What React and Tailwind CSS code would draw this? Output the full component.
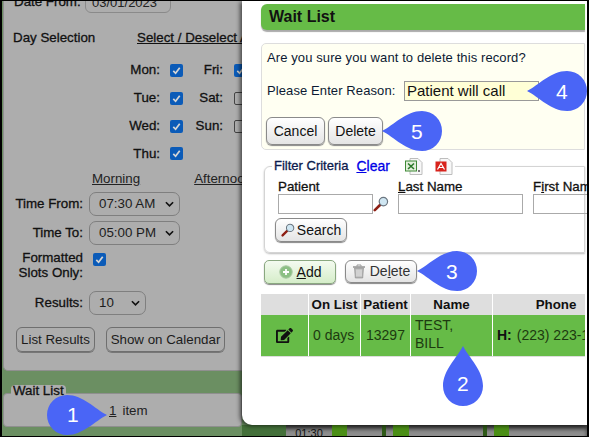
import React from "react";
import { FaEdit } from "react-icons/fa";

function Pin({ n, className, dir }) {
  // tip direction: left, right or up; the number sits a little towards the tip
  const rotate = { right: "", left: "rotate(180 30 30)", up: "rotate(-90 30 30)" }[dir];
  const box = dir === "up" ? "w-[40px] h-[62px]" : "w-[60px] h-[40px]";
  const view = dir === "up" ? "10 0 40 62" : "0 10 60 40";
  return (
    <div className={`absolute ${box} ${className}`}>
      <svg viewBox={view} className="absolute inset-0 w-full h-full">
        <path transform={rotate} fill="#4a65f6" d="M60 30 C48 24 36 10 20 10 A20 20 0 0 0 20 50 C36 50 48 36 60 30Z" />
      </svg>
      <span className={`absolute text-white text-[21px] leading-none ${dir === "right" ? "left-[20px] top-[9px]" : dir === "left" ? "left-[29px] top-[10px]" : "left-[14px] top-[27px]"}`}>{n}</span>
    </div>
  );
}

function Check({ on = true }) {
  return on ? (
    <span className="w-[13px] h-[13px] rounded-[2px] bg-[#0b5bb8] flex items-center justify-center shrink-0">
      <svg viewBox="0 0 12 12" className="w-[11px] h-[11px]"><path d="M2.5 6.5 5 9l4.5-6" fill="none" stroke="#d5d5d5" strokeWidth="1.9" /></svg>
    </span>
  ) : (
    <span className="block w-[13px] h-[13px] rounded-[2px] border border-[#444] shrink-0" />
  );
}

function Select({ value, width }) {
  return (
    <div className={`${width} h-[24px] rounded-[7px] border border-[#7f7f7f] flex items-center justify-between pl-[9px] pr-[5px] text-[13.33px] text-[#1c1c1c]`}>
      <span>{value}</span>
      <svg viewBox="0 0 10 6" className="w-[9px] h-[6px]"><path d="M1 1l4 4 4-4" fill="none" stroke="#111" strokeWidth="1.8" /></svg>
    </div>
  );
}

function DayRow({ day, on, day2, on2, height = "h-[28px]" }) {
  return (
    <div className={`flex items-center ${height}`}>
      <span className="w-[156px] shrink-0 text-right text-[13.33px] [-webkit-text-stroke:0.3px]">{day}</span>
      <span className="ml-[10px] shrink-0"><Check on={on} /></span>
      {day2 && <span className="w-[40px] shrink-0 text-right text-[13.33px] [-webkit-text-stroke:0.3px]">{day2}</span>}
      {day2 && <span className="ml-[11px] shrink-0"><Check on={on2} /></span>}
    </div>
  );
}

function GrayButton({ children, className }) {
  return (
    <div className={`h-[25px] rounded-[6px] border border-[#6f6f6f] shadow-[0_1px_0_#777] flex items-center justify-center text-[13.33px] text-[#1c1c1c] ${className}`}>{children}</div>
  );
}

function ModalButton({ children, className }) {
  return (
    <div className={`rounded-[6px] border border-[#8a8a8a] bg-gradient-to-b from-white to-[#e4e4e4] shadow-[0_1px_1px_#888] flex items-center justify-center text-[14px] text-[#111] ${className}`}>{children}</div>
  );
}

function Magnifier({ className }) {
  return (
    <svg viewBox="0 0 16 16" className={className}>
      <path d="M7 9 1.8 14.2" stroke="#8e1f14" strokeWidth="2.6" strokeLinecap="round" />
      <circle cx="10.4" cy="5.6" r="4.2" fill="#cfe6f2" stroke="#6b7680" strokeWidth="1.2" />
    </svg>
  );
}

function FileIcon({ kind }) {
  const excel = kind === "excel";
  return (
    <svg viewBox="0 0 18 17" className="w-[18px] h-[17px]">
      <path d="M5 .5h8l4 4v12H5z" fill="#f7f7f7" stroke="#bdbdbd" />
      {excel ? (
        <>
          <rect x="0.5" y="3" width="11" height="10" fill="#e3efdc" stroke="#3f8a37" />
          <path d="M3 5.5l6 5.5M9 5.5l-6 5.5" stroke="#2c7a2a" strokeWidth="1.6" />
          <rect x="13" y="12" width="2" height="2" fill="#777" />
        </>
      ) : (
        <>
          <rect x="0.5" y="3.5" width="11" height="10" fill="#d8231c" />
          <path d="M2.5 11.5 6 5.5l3.5 6M4 9.5h4" fill="none" stroke="#fff" strokeWidth="1.2" />
        </>
      )}
    </svg>
  );
}

function Th({ children, className }) {
  return <div className={`bg-[#dedede] flex items-center justify-center text-[13.33px] font-bold text-[#111] ${className}`}>{children}</div>;
}

function Td({ children, className }) {
  return <div className={`bg-[#66bb47] flex items-center text-[14px] text-[#1d3a10] ${className}`}>{children}</div>;
}

export default function App() {
  return (
    <div className="relative w-[589px] h-[437px] overflow-hidden border-y border-x-2 border-black bg-[#6b8f62] text-[#111]" style={{ fontFamily: '"Liberation Sans", Arial, sans-serif' }}>
      <div className="flex h-full">
        {/* dimmed page behind the dialog */}
        <div className="w-[240px] shrink-0 pl-[1px]">
          <div className="h-[370px] bg-[#adadad] rounded-bl-[5px] border-b border-l border-[#8f8f8f] overflow-hidden">
            <div className="flex items-center h-[14px] mt-[-1px]">
              <span className="ml-[10px] w-[69px] shrink-0 text-[13.33px] [-webkit-text-stroke:0.3px] mt-[-11px] whitespace-nowrap">Date From:</span>
              <div className="ml-[2px] w-[86px] h-[24px] mt-[-12px] rounded-[6px] border border-[#8a8a8a] flex items-end pl-[6px] text-[13px] text-[#222] shrink-0">03/01/2023</div>
            </div>
            <div className="flex items-center h-[18px] mt-[15px] text-[13.33px] [-webkit-text-stroke:0.3px] whitespace-nowrap">
              <span className="ml-[9px] w-[82px] shrink-0">Day Selection</span>
              <span className="ml-[42px] underline shrink-0">Select / Deselect All</span>
            </div>
            <div className="mt-[9px]">
              <DayRow day="Mon:" on day2="Fri:" on2 />
              <DayRow day="Tue:" on day2="Sat:" on2={false} />
              <DayRow day="Wed:" on day2="Sun:" on2={false} />
              <DayRow day="Thu:" on height="h-[27px]" />
            </div>
            <div className="flex h-[20px] mt-[2px] items-center text-[13.33px] underline text-[#222] whitespace-nowrap">
              <span className="ml-[88px] shrink-0">Morning</span>
              <span className="ml-[54px] shrink-0">Afternoon</span>
            </div>
            <div className="flex items-center gap-[6px] mt-[3px]">
              <span className="w-[79px] text-right text-[13.33px] [-webkit-text-stroke:0.3px]">Time From:</span>
              <Select value="07:30 AM" width="w-[91px]" />
            </div>
            <div className="flex items-center gap-[6px] mt-[5px]">
              <span className="w-[79px] text-right text-[13.33px] [-webkit-text-stroke:0.3px]">Time To:</span>
              <Select value="05:00 PM" width="w-[91px]" />
            </div>
            <div className="flex gap-[10px] mt-[5px] h-[39px]">
              <span className="w-[79px] text-right text-[13.33px] [-webkit-text-stroke:0.3px] leading-[15px]">Formatted Slots Only:</span>
              <span className="mt-[3px]"><Check /></span>
            </div>
            <div className="flex items-center gap-[6px] mt-[2px]">
              <span className="w-[79px] text-right text-[13.33px] [-webkit-text-stroke:0.3px]">Results:</span>
              <Select value="10" width="w-[57px]" />
            </div>
            <div className="flex gap-[11px] ml-[12px] mt-[12px]">
              <GrayButton className="w-[79px]">List Results</GrayButton>
              <GrayButton className="w-[119px]">Show on Calendar</GrayButton>
            </div>
          </div>
          <div className="relative mt-[22px] h-[34px] bg-[#adadad] rounded-[4px] border border-[#8f8f8f] flex items-center justify-start pl-[105px] text-[13.33px] text-[#222] pt-[1px]">
            <span className="absolute left-[7px] top-[-9px] px-[2px] h-[12px] rounded-t-[4px] bg-[#adadad] [-webkit-text-stroke:0.3px] leading-[12px] text-[#111] whitespace-nowrap">Wait List</span>
            <span className="underline">1</span>
            <span className="ml-[6px]">item</span>
          </div>
        </div>

        {/* calendar strip, only its last row shows under the dialog */}
        <div className="flex-1 flex flex-col justify-end min-w-0">
          <div className="h-[11px] flex bg-[#8e8e8e] text-[11px] overflow-hidden shadow-[inset_0_4px_4px_rgba(0,0,0,.6)]">
            <div className="w-[44px] bg-[#44703a]" />
            <div className="w-[46px] text-center leading-[16px]">01:30</div>
            <div className="w-[15px] bg-[#4b8f16]" />
            <div className="w-[35px]" />
            <div className="w-[4px] bg-[#2f5a18]" />
            <div className="w-[7px]" />
            <div className="w-[16px] bg-[#4b8f16]" />
            <div className="w-[74px]" />
            <div className="w-[4px] bg-[#2f5a18]" />
            <div className="w-[7px]" />
            <div className="w-[15px] bg-[#4b8f16]" />
          </div>
        </div>
      </div>

      {/* Wait list dialog */}
      <div className="absolute left-[240px] top-0 w-[345px] h-[424px] bg-white rounded-bl-[10px] shadow-[-2px_1px_4px_rgba(0,0,0,.6)] pl-[19px] pr-[2px] pt-[3px] overflow-hidden">
        <div className="h-[26px] bg-[#66bb47] rounded-l-[6px] shadow-[0_2px_1px_#aaa] flex items-center pl-[8px] text-[16px] font-bold text-[#111]">Wait List</div>

        <div className="mt-[13px] h-[107px] bg-[#fffff2] border border-[#ddd] rounded-l-[5px] pl-[5px] pt-[6px] text-[13px] text-[#0c1a33] tracking-[0.1px]">
          <div className="h-[16px] leading-[16px] whitespace-nowrap">Are you sure you want to delete this record?</div>
          <div className="flex items-center mt-[15px] h-[20px]">
            <span className="w-[137px] shrink-0 whitespace-nowrap">Please Enter Reason:</span>
            <div className="w-[135px] h-[20px] border border-[#999] bg-[#ffffd6] pl-[2px] text-[15px] tracking-normal leading-[18px] text-[#111] whitespace-nowrap">Patient will call</div>
          </div>
          <div className="flex gap-[3px] mt-[16px] ml-[-1px] tracking-normal">
            <ModalButton className="w-[59px] h-[28px]">Cancel</ModalButton>
            <ModalButton className="w-[55px] h-[28px]">Delete</ModalButton>
          </div>
        </div>

        <div className="relative mt-[16px] ml-[3px] h-[87px] border border-[#d4d4d4] rounded-l-[6px] shadow-[0_1px_2px_#bbb] pl-[13px] pt-[12px]">
          <div className="absolute left-[7px] top-[-11px] bg-white px-[2px] flex items-center h-[20px] text-[13px] [-webkit-text-stroke:0.3px] text-[#0c1a4d] whitespace-nowrap">
            <span>Filter Criteria</span>
            <span className="ml-[8px] text-[#0000e6] text-[14px]"><span className="underline">C</span>lear</span>
            <span className="ml-[15px] flex gap-[12px]"><FileIcon kind="excel" /><FileIcon kind="pdf" /></span>
          </div>
          <div className="flex text-[13.33px] [-webkit-text-stroke:0.3px] leading-[15px] whitespace-nowrap">
            <div className="w-[120px] shrink-0">
              <div>Patient</div>
              <div className="flex items-center">
                <div className="w-[95px] h-[20px] border border-[#aaa]" />
                <Magnifier className="w-[16px] h-[16px]" />
              </div>
            </div>
            <div className="w-[135px] shrink-0">
              <div><span className="underline">L</span>ast Name</div>
              <div className="w-[125px] h-[20px] border border-[#aaa]" />
            </div>
            <div className="w-[100px] shrink-0">
              <div>F<span className="underline">i</span>rst Name</div>
              <div className="w-[100px] h-[20px] border border-[#aaa]" />
            </div>
          </div>
          <ModalButton className="w-[72px] h-[24px] mt-[4px] ml-[-3px] gap-[2px]">
            <Magnifier className="w-[14px] h-[14px]" />
            <span>Search</span>
          </ModalButton>
        </div>

        <div className="flex gap-[9px] mt-[7px] ml-[3px]">
          <div className="w-[72px] h-[24px] rounded-[5px] border border-[#8aa880] bg-gradient-to-b from-[#f4fbf0] to-[#d5edc9] shadow-[0_1px_1px_#888] flex items-center justify-center gap-[4px] text-[14px]">
            <svg viewBox="0 0 14 14" className="w-[14px] h-[14px]">
              <circle cx="7" cy="7" r="6.2" fill="#8cc084" stroke="#a8c8a2" />
              <path d="M7 4v6M4 7h6" stroke="#fff" strokeWidth="1.8" />
            </svg>
            <span><span className="underline">A</span>dd</span>
          </div>
          <ModalButton className="w-[72px] h-[23px] gap-[4px] !text-[#333]">
            <svg viewBox="0 0 14 15" className="w-[14px] h-[15px]">
              <path d="M1 3h12" stroke="#9a9a9a" strokeWidth="1.6" />
              <path d="M5 2.5V1h4v1.5" fill="none" stroke="#9a9a9a" />
              <path d="M2.5 4h9l-.8 10H3.3z" fill="#b5b5b5" stroke="#8a8a8a" strokeWidth=".6" />
              <path d="M5 5.5v7M7 5.5v7M9 5.5v7" stroke="#eee" />
            </svg>
            <span>De<span className="underline">l</span>ete</span>
          </ModalButton>
        </div>

        <div className="mt-[10px] w-[324px] grid grid-cols-[47px_51px_49px_81px_126px] gap-x-[1px] grid-rows-[21px_41px] overflow-hidden">
          <Th />
          <Th>On List</Th>
          <Th>Patient</Th>
          <Th>Name</Th>
          <Th>Phone</Th>
          <Td className="justify-center"><FaEdit className="w-[17px] h-[17px] text-[#111]" /></Td>
          <Td className="pl-[4px]">0 days</Td>
          <Td className="pl-[5px]">13297</Td>
          <Td className="pl-[4px] pb-[4px] leading-[18px]">TEST,<br />BILL</Td>
          <Td className="pl-[4px] whitespace-nowrap overflow-hidden"><b className="text-[#111] mr-[5px]">H:</b> (223) 223-1234</Td>
        </div>
        <div className="h-[1px] w-[324px] bg-[#ddd]" />
      </div>

      {/* callouts */}
      <Pin n="1" dir="right" className="left-[45px] top-[394px]" />
      <Pin n="2" dir="up" className="left-[441px] top-[345px]" />
      <Pin n="3" dir="left" className="left-[415px] top-[250px]" />
      <Pin n="4" dir="left" className="left-[525px] top-[70px]" />
      <Pin n="5" dir="left" className="left-[380px] top-[110px]" />
    </div>
  );
}
